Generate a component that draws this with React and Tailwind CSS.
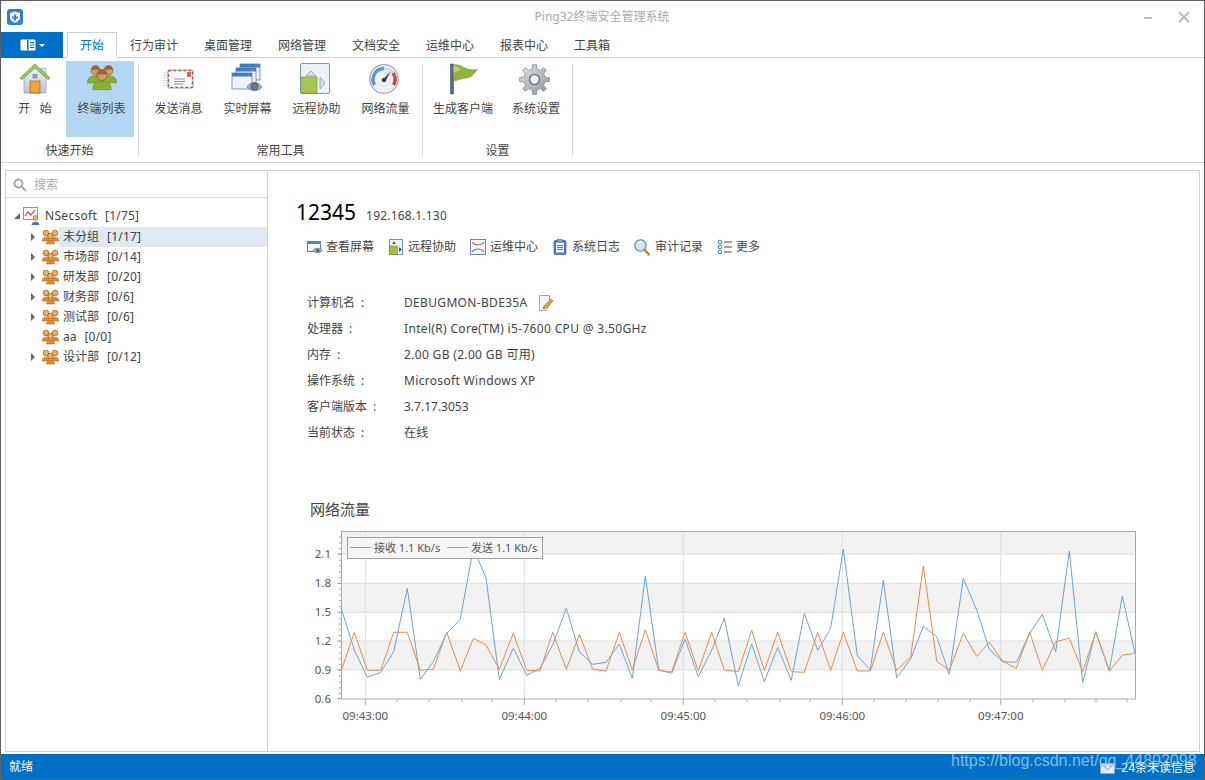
import React from 'react';

// ---- data ----
const tabs = ['行为审计', '桌面管理', '网络管理', '文档安全', '运维中心', '报表中心', '工具箱'];

const groups = [
  { name: '未分组', count: '[1/17]', selected: true, arrow: true },
  { name: '市场部', count: '[0/14]', arrow: true },
  { name: '研发部', count: '[0/20]', arrow: true },
  { name: '财务部', count: '[0/6]', arrow: true },
  { name: '测试部', count: '[0/6]', arrow: true },
  { name: 'aa', count: '[0/0]', arrow: false },
  { name: '设计部', count: '[0/12]', arrow: true },
];

const infoRows = [
  ['计算机名\u2002:', 'DEBUGMON-BDE35A'],
  ['处理器\u2002:', 'Intel(R) Core(TM) i5-7600 CPU @ 3.50GHz'],
  ['内存\u2002:', '2.00 GB (2.00 GB 可用)'],
  ['操作系统\u2002:', 'Microsoft Windows XP'],
  ['客户端版本\u2002:', '3.7.17.3053'],
  ['当前状态\u2002:', '在线'],
];

// points read off the chart, in window pixels
const left = (pts) => pts.map(([x, y]) => [x / 3 + 300, y / 3 + 495]);
const right = (pts) => pts.map(([x, y]) => [x / 3 + 720, y / 3 + 495]);

const blue = [
  ...left([[125, 345], [163, 465], [202, 547], [242, 532], [281, 470], [322, 280], [361, 553], [400, 500], [440, 415], [481, 373], [520, 160], [558, 248], [598, 553], [640, 460], [680, 541], [720, 520], [758, 450], [799, 340], [838, 470], [878, 508], [918, 502], [958, 448], [997, 550], [1036, 243], [1076, 525], [1115, 535], [1155, 432], [1195, 545], [1235, 465]]),
  ...right([[13, 370], [55, 572], [95, 447], [133, 560], [173, 457], [214, 556], [253, 355], [293, 466], [332, 400], [370, 162], [412, 482], [451, 525], [490, 256], [530, 548], [572, 492], [610, 394], [650, 425], [688, 538], [730, 250], [770, 345], [808, 463], [848, 500], [889, 502], [929, 415], [967, 358], [1007, 470], [1048, 168], [1088, 563], [1127, 410], [1168, 527], [1207, 303], [1245, 475]]),
];

const orange = [
  ...left([[125, 523], [163, 412], [202, 526], [242, 526], [281, 412], [322, 412], [361, 526], [400, 523], [440, 412], [481, 528], [520, 430], [558, 450], [598, 523], [640, 415], [680, 526], [720, 528], [758, 412], [799, 523], [838, 418], [878, 523], [918, 528], [958, 412], [997, 525], [1036, 405], [1076, 526], [1115, 530], [1155, 412], [1195, 528], [1235, 412]]),
  ...right([[13, 525], [55, 530], [95, 406], [133, 527], [173, 412], [214, 530], [253, 532], [293, 412], [332, 526], [370, 412], [412, 528], [451, 528], [490, 412], [530, 526], [572, 485], [610, 213], [650, 498], [688, 526], [730, 415], [770, 484], [808, 442], [848, 498], [889, 520], [929, 412], [967, 526], [1007, 440], [1048, 430], [1088, 530], [1127, 412], [1168, 528], [1207, 481], [1245, 475]]),
];

const toLine = (pts) => pts.map(([x, y]) => `${x.toFixed(1)},${y.toFixed(1)}`).join(' ');

// ---- icons ----
function Logo() {
  return (
    <svg width="16" height="16" viewBox="0 0 16 16">
      <rect width="16" height="16" rx="3" fill="#2f7fe0" />
      <path d="M8 2.5 L13 4 V8.5 C13 11 10.5 12.8 8 13.8 C5.5 12.8 3 11 3 8.5 V4 Z" fill="#fff" />
      <path d="M7 5.5 h2 v2 h2 v2 h-2 v2 h-2 v-2 h-2 v-2 h2 z" fill="#2f7fe0" />
    </svg>
  );
}

function HouseIcon() {
  return (
    <svg width="32" height="32" viewBox="0 0 32 32">
      <defs>
        <linearGradient id="wall" x1="0" y1="0" x2="0" y2="1"><stop offset="0" stopColor="#f1f3f8" /><stop offset="1" stopColor="#bcc5d8" /></linearGradient>
      </defs>
      <rect x="22" y="5" width="5" height="8" fill="#d5dae4" stroke="#a4adbe" strokeWidth="0.6" />
      <path d="M5 14 L16 4 L27 14 V30 H5 Z" fill="url(#wall)" stroke="#8e99b0" strokeWidth="0.7" />
      <path d="M1 15 L16 1 L31 15 L29 16.5 L16 5 L3 16.5 Z" fill="#9cc95a" stroke="#5f9130" strokeWidth="0.7" />
      <rect x="13.5" y="11" width="5" height="4.5" fill="#8b99ba" />
      <rect x="11" y="18" width="10" height="12" fill="#f3a33c" stroke="#a86a1d" strokeWidth="0.8" />
    </svg>
  );
}

function PeopleIcon() {
  const person = (cx, cy, s) => (
    <g>
      <path d={`M${cx - 9 * s} ${cy + 14 * s} C${cx - 9 * s} ${cy + 7 * s} ${cx - 5 * s} ${cy + 6 * s} ${cx} ${cy + 6 * s} C${cx + 5 * s} ${cy + 6 * s} ${cx + 9 * s} ${cy + 7 * s} ${cx + 9 * s} ${cy + 14 * s} Z`} fill="#8bb035" stroke="#5c7d1e" strokeWidth="0.5" />
      <circle cx={cx} cy={cy} r={5 * s} fill="#d39a6c" stroke="#8a5428" strokeWidth="0.7" />
      <path d={`M${cx - 5 * s} ${cy - 1 * s} A${5 * s} ${5 * s} 0 0 1 ${cx + 5 * s} ${cy - 1 * s} Z`} fill="#99643a" />
    </g>
  );
  return (
    <svg width="30" height="28" viewBox="0 0 32 30">
      {person(9, 6, 0.95)}
      {person(23, 6, 0.95)}
      {person(16, 11, 1.1)}
    </svg>
  );
}

function SmallGroup() {
  const head = (cx, cy) => (
    <g>
      <path d={`M${cx - 4} ${cy + 8} C${cx - 4} ${cy + 3} ${cx + 4} ${cy + 3} ${cx + 4} ${cy + 8} Z`} fill="#e58a2b" stroke="#a85f14" strokeWidth="0.5" />
      <circle cx={cx} cy={cy} r="2.8" fill="#f0b060" stroke="#8f5520" strokeWidth="0.7" />
    </g>
  );
  return (
    <svg width="17" height="16" viewBox="0 0 17 16">
      {head(4, 4)}
      {head(13, 4)}
      {head(8.5, 7)}
    </svg>
  );
}

function EnvelopeIcon() {
  return (
    <svg width="31" height="22" viewBox="0 0 31 22">
      <g stroke="#b8c1d8" strokeWidth="0.7">
        <path d="M0 5 H5 M0 7.5 H5 M0 10 H5 M0 12.5 H5 M0 15 H5 M0 17.5 H5" />
      </g>
      <rect x="5" y="2" width="25" height="18" rx="1" fill="#f6f8fc" stroke="#6d7a9c" strokeWidth="0.7" />
      <rect x="5.6" y="2.6" width="23.8" height="16.8" fill="none" stroke="#c8443c" strokeWidth="1.2" strokeDasharray="2.5 2.5" />
      <rect x="24" y="4" width="4" height="5" fill="#e0605a" />
      <path d="M11 11 H22 M11 13.5 H22 M11 16 H20" stroke="#7d93c6" strokeWidth="1" />
    </svg>
  );
}

function ScreenStackIcon() {
  const win = (x, y) => (
    <g>
      <rect x={x} y={y} width="20" height="16" fill="#eef3fa" stroke="#4a6f9e" strokeWidth="0.7" />
      <rect x={x} y={y} width="20" height="3.5" fill="#3d7cc0" />
      <rect x={x + 15} y={y + 1} width="3" height="1.6" fill="#e0605a" />
    </g>
  );
  return (
    <svg width="32" height="32" viewBox="0 0 32 32">
      {win(9, 1)}
      {win(5, 5)}
      {win(1, 10)}
      <path d="M16 24 C19 18 28 18 31 24 C28 29 19 29 16 24 Z" fill="#aeb4bc" stroke="#6f7680" strokeWidth="0.7" />
      <circle cx="23.5" cy="23.5" r="3.6" fill="#5f7fa6" stroke="#38465c" strokeWidth="0.7" />
    </svg>
  );
}

function RemoteIcon() {
  return (
    <svg width="30" height="32" viewBox="0 0 30 32">
      <rect x="0.5" y="0.5" width="29" height="30" rx="1.5" fill="#edf2fa" stroke="#7f95c0" />
      <path d="M6 13 L11 8 L16 13 Z" fill="#dde3ee" stroke="#8a97ad" strokeWidth="0.8" />
      <path d="M20 14 L25 20 L20 26 Z" fill="#dde3ee" stroke="#8a97ad" strokeWidth="0.8" />
      <rect x="1" y="14" width="16" height="16" fill="#a6c653" stroke="#7c9e35" strokeWidth="0.7" />
    </svg>
  );
}

function GaugeIcon() {
  return (
    <svg width="30" height="30" viewBox="0 0 30 30">
      <circle cx="15" cy="15" r="14.3" fill="#eef1f7" stroke="#9aa6c0" strokeWidth="1.2" />
      <path d="M5.5 21 A11 11 0 0 1 15 4.5" fill="none" stroke="#5f97d6" strokeWidth="3.5" />
      <path d="M15 4.5 A11 11 0 0 1 24 9" fill="none" stroke="#d5dce8" strokeWidth="3.5" />
      <path d="M24 9 A11 11 0 0 1 24.5 21" fill="none" stroke="#c8503a" strokeWidth="3.5" />
      <path d="M14 15.5 L22 7 L16.5 17 Z" fill="#3d4450" />
      <circle cx="15" cy="16" r="2.3" fill="#38404e" />
    </svg>
  );
}

function FlagIcon() {
  return (
    <svg width="30" height="32" viewBox="0 0 30 32">
      <rect x="1.5" y="1" width="3" height="30" fill="#55698a" stroke="#35435c" strokeWidth="0.5" />
      <path d="M4.5 2 C10 1 13 3.5 17 5.5 C21 7 25 7 28.5 6.5 C26 9 25 11 22.5 13 C19 15.5 15 15 12 16 C9 17 7 17.5 4.5 18 Z" fill="#8fb438" stroke="#6f9027" strokeWidth="0.5" />
      <path d="M4.5 3 C8 3 10 5 12 7 L4.5 10 Z" fill="#b6d265" />
    </svg>
  );
}

function GearIcon() {
  const teeth = 8;
  let d = '';
  for (let i = 0; i < teeth; i++) {
    const a = (i * 2 * Math.PI) / teeth;
    const pts = [[-0.22, 10.8], [-0.13, 15], [0.13, 15], [0.22, 10.8]];
    pts.forEach(([off, r], k) => {
      const x = 15.5 + r * Math.cos(a + off);
      const y = 15.5 + r * Math.sin(a + off);
      d += `${i === 0 && k === 0 ? 'M' : 'L'}${x.toFixed(2)} ${y.toFixed(2)} `;
    });
  }
  return (
    <svg width="31" height="31" viewBox="0 0 31 31">
      <defs>
        <linearGradient id="gear" x1="0" y1="0" x2="1" y2="1"><stop offset="0" stopColor="#dfe3ea" /><stop offset="1" stopColor="#8b94a6" /></linearGradient>
      </defs>
      <path d={d + 'Z'} fill="url(#gear)" stroke="#757e90" strokeWidth="0.7" />
      <circle cx="15.5" cy="15.5" r="5" fill="#f4f5f8" stroke="#6d7688" strokeWidth="1.6" />
    </svg>
  );
}

function RootIcon() {
  return (
    <svg width="18" height="18" viewBox="0 0 18 18">
      <rect x="0.5" y="0.5" width="14" height="12" fill="#fbfbfd" stroke="#8a93a8" />
      <path d="M2 9 L5 5 L8 8 L12 3" fill="none" stroke="#d0443a" strokeWidth="1.2" />
      <circle cx="12.5" cy="11" r="2.5" fill="#e9a76a" stroke="#8f5c2c" strokeWidth="0.5" />
      <path d="M8.5 18 C8.5 13.5 16.5 13.5 16.5 18 Z" fill="#3d78b8" />
    </svg>
  );
}

function ActionIcon({ kind }) {
  if (kind === 'screen') {
    return (
      <svg width="16" height="16" viewBox="0 0 16 16">
        <rect x="0.5" y="2.5" width="13" height="10" fill="#f1f5fa" stroke="#5e7ea8" />
        <rect x="0.5" y="2.5" width="13" height="2.5" fill="#4d86c4" />
        <path d="M6 11.5 C8 8.5 13 8.5 15.5 11.5 C13 14.5 8 14.5 6 11.5 Z" fill="#b2b8c0" stroke="#5d6570" strokeWidth="0.6" />
        <circle cx="10.7" cy="11.5" r="1.8" fill="#48607f" />
      </svg>
    );
  }
  if (kind === 'remote') {
    return (
      <svg width="16" height="16" viewBox="0 0 16 16">
        <rect x="1.5" y="0.5" width="13" height="15" fill="#eef2f8" stroke="#7f8ea8" />
        <path d="M4 5 L6 2.5 L8 5 Z" fill="#4a5568" />
        <path d="M11 8 L14 10.5 L11 13 Z" fill="#4a5568" />
        <rect x="1.5" y="7" width="8" height="8.5" fill="#9dbf45" stroke="#6f9027" strokeWidth="0.6" />
      </svg>
    );
  }
  if (kind === 'ops') {
    return (
      <svg width="16" height="16" viewBox="0 0 16 16">
        <rect x="0.5" y="0.5" width="15" height="15" fill="#f7f9fc" stroke="#6b86b8" />
        <path d="M2 3 C5 7 11 7 14 3" fill="none" stroke="#d65a4a" strokeWidth="1.1" />
        <path d="M2 13 C5 9 11 9 14 13" fill="none" stroke="#5a84c4" strokeWidth="1.1" />
      </svg>
    );
  }
  if (kind === 'log') {
    return (
      <svg width="16" height="16" viewBox="0 0 16 16">
        <rect x="2" y="1.5" width="12" height="14" rx="1" fill="#4d7cb4" stroke="#345a8c" strokeWidth="0.6" />
        <rect x="4" y="3.5" width="8" height="10" fill="#f3f6fa" />
        <rect x="5.5" y="0.5" width="5" height="2.5" fill="#8aa5c8" stroke="#345a8c" strokeWidth="0.5" />
        <path d="M5 6.5 H11 M5 8.5 H11 M5 10.5 H11" stroke="#4d6f9c" strokeWidth="0.9" />
      </svg>
    );
  }
  if (kind === 'search') {
    return (
      <svg width="16" height="17" viewBox="0 0 16 17">
        <circle cx="6.5" cy="6.5" r="5.7" fill="#cfe2f5" stroke="#5d7fa8" strokeWidth="1.1" />
        <path d="M4 4 A4 4 0 0 1 8 3" fill="none" stroke="#fff" strokeWidth="1.2" />
        <path d="M10.7 11 L15 15.5" stroke="#b5792f" strokeWidth="2.2" strokeLinecap="round" />
      </svg>
    );
  }
  return (
    <svg width="16" height="16" viewBox="0 0 16 16">
      <g fill="none" stroke="#3d78b8" strokeWidth="1">
        <circle cx="3" cy="3" r="1.8" />
        <circle cx="3" cy="8" r="1.8" />
        <circle cx="3" cy="13" r="1.8" />
      </g>
      <path d="M7 3 H15 M7 8 H15 M7 13 H15" stroke="#444" strokeWidth="1" />
    </svg>
  );
}

function EditIcon() {
  return (
    <svg width="16" height="16" viewBox="0 0 16 16">
      <path d="M1.5 0.5 H11.5 V10 L8 15.5 H1.5 Z" fill="#f4f6fa" stroke="#98a6bc" />
      <path d="M5 14 L6 11 L13 4 L15 6 L8 13 Z" fill="#e2a63a" stroke="#8f6420" strokeWidth="0.6" />
    </svg>
  );
}

// ---- pieces ----
function RibbonButton({ label, width, iconGap = '', active, children }) {
  return (
    <div className={`flex h-[76px] flex-col items-center ${width} ${active ? 'bg-[#b3d7f2] pl-[3px]' : ''}`}>
      <div className={`flex h-[36px] items-center justify-center ${iconGap}`}>{children}</div>
      <span className="mt-[4px] whitespace-pre leading-[16px]">{label}</span>
    </div>
  );
}

function RibbonGroup({ label, width, children }) {
  return (
    <div className={`flex h-[92px] flex-col border-r border-[#d9d9d9] ${width}`}>
      <div className="flex -mt-[3px]">{children}</div>
      <div className="mt-[6px] text-center leading-[16px]">{label}</div>
    </div>
  );
}

function TreeRow({ name, count, selected, arrow }) {
  return (
    <div className="flex h-[20px] items-center pl-[22px]">
      <span className="flex w-[10px] justify-center">
        {arrow && <span className="h-0 w-0 border-y-[4px] border-l-[4px] border-y-transparent border-l-[#666]" />}
      </span>
      <span className="ml-[4px] flex w-[17px]"><SmallGroup /></span>
      <div className={`flex h-[20px] flex-1 items-center pl-[4px] ${selected ? 'bg-[#dee9f3]' : ''}`}>
        <span>{name}</span>
        <span className="ml-[8px] tracking-[0.2px]">{count}</span>
      </div>
    </div>
  );
}

function TrafficChart() {
  const yLabels = [['2.1', 554], ['1.8', 583.3], ['1.5', 612.3], ['1.2', 641], ['0.9', 669.7], ['0.6', 698.5]];
  const xLabels = [['09:43:00', 365.3], ['09:44:00', 524.3], ['09:45:00', 683.3], ['09:46:00', 842.3], ['09:47:00', 1000.7]];
  const minorX = [397, 429, 462, 492, 556, 588, 621, 651, 715, 747, 780, 810, 874, 906, 938, 970, 1033, 1065, 1096, 1127];
  const minorY = [];
  for (let y = 537; y < 699; y += 5.8) minorY.push(y);
  return (
    <svg className="mt-[5px] block" width="850" height="205" viewBox="300 525 850 205">
      <rect x="341.5" y="531.5" width="794" height="23" fill="#f2f2f2" />
      <rect x="341.5" y="583.3" width="794" height="29" fill="#f2f2f2" />
      <rect x="341.5" y="641" width="794" height="28.7" fill="#f2f2f2" />
      <g stroke="#dedede" strokeWidth="1">
        {yLabels.slice(0, 5).map(([t, y]) => <line key={t} x1="341" x2="1135" y1={y} y2={y} />)}
        {xLabels.map(([t, x]) => <line key={t} x1={x} x2={x} y1="531" y2="699" />)}
      </g>
      <rect x="341.5" y="531.5" width="794" height="167.5" fill="none" stroke="#a8a8a8" />
      <g stroke="#a8a8a8" strokeWidth="1">
        {minorY.map((y) => <line key={y} x1="339" x2="341" y1={y} y2={y} />)}
        {yLabels.map(([t, y]) => <line key={t} x1="337" x2="341" y1={y} y2={y} />)}
        {minorX.map((x) => <line key={x} x1={x} x2={x} y1="699" y2="702" />)}
        {xLabels.map(([t, x]) => <line key={t} x1={x} x2={x} y1="699" y2="705" />)}
      </g>
      <polyline points={toLine(blue)} fill="none" stroke="#6aa5da" strokeWidth="1" />
      <polyline points={toLine(orange)} fill="none" stroke="#ef8a45" strokeWidth="1" />
      <g fill="#555" fontSize="11.5">
        {yLabels.map(([t, y]) => <text key={t} x="331" y={y + 4} textAnchor="end">{t}</text>)}
        {xLabels.map(([t, x]) => <text key={t} x={x} y="720" textAnchor="middle">{t}</text>)}
      </g>
      <rect x="347.5" y="537.5" width="195" height="21" fill="#f6f6f6" fillOpacity="0.9" stroke="#a0a0a0" />
      <line x1="350" x2="371" y1="547.5" y2="547.5" stroke="#6aa5da" strokeWidth="1" />
      <line x1="447" x2="468" y1="547.5" y2="547.5" stroke="#ef8a45" strokeWidth="1" />
      <g fill="#555" fontSize="11">
        <text x="374" y="551.5">接收 1.1 Kb/s</text>
        <text x="471" y="551.5">发送 1.1 Kb/s</text>
      </g>
    </svg>
  );
}

export default function App() {
  return (
    <div className="relative flex h-[780px] w-[1205px] flex-col overflow-hidden border border-[#5f5f5f] bg-white font-['Noto_Sans','Noto_Sans_CJK_SC',sans-serif] text-[12px] text-[#444]">
      {/* title bar */}
      <div className="flex h-[31px] items-center pl-[6px]">
        <Logo />
        <div className="flex-1 pl-[37px] text-center text-[#aaa]">Ping32终端安全管理系统</div>
        <span className="mr-[26px] mt-[3px] h-[2px] w-[8px] bg-[#bbb]" />
        <svg className="mr-[14px]" width="12" height="12" viewBox="0 0 12 12"><path d="M1 1 L11 11 M11 1 L1 11" stroke="#bbb" strokeWidth="2" /></svg>
      </div>

      {/* tabs */}
      <div className="flex h-[26px] border-b border-[#d0d0d0]">
        <div className="flex h-[26px] w-[62px] items-center justify-center gap-[3px] bg-[#0070c6]">
          <svg width="16" height="12" viewBox="0 0 16 12">
            <rect x="0.5" y="0.5" width="15" height="11" rx="1.5" fill="#fff" />
            <rect x="7" y="1" width="1.5" height="10" fill="#0070c6" />
            <path d="M10 3.5 H14 M10 6 H14 M10 8.5 H14" stroke="#0070c6" />
          </svg>
          <span className="h-0 w-0 border-x-[3px] border-t-[3px] border-x-transparent border-t-white" />
        </div>
        <div className="ml-[4px] flex h-[26px] w-[50px] items-center justify-center border border-b-white border-[#d0d0d0] bg-white pt-[1px] text-[#0070c6]">开始</div>
        {tabs.map((t) => (
          <div key={t} className="flex items-center px-[13px] pt-[2px]">{t}</div>
        ))}
      </div>

      {/* ribbon */}
      <div className="flex h-[105px] items-start border-b border-[#d0d0d0] pt-[6px]">
        <RibbonGroup label="快速开始" width="w-[138px]">
          <RibbonButton label="开   始" width="ml-[3px] w-[62px]"><HouseIcon /></RibbonButton>
          <RibbonButton label="终端列表" width="w-[68px]" active><PeopleIcon /></RibbonButton>
        </RibbonGroup>
        <RibbonGroup label="常用工具" width="w-[284px]">
          <RibbonButton label="发送消息" width="ml-[5px] w-[69px]" iconGap="pr-[1px]"><EnvelopeIcon /></RibbonButton>
          <RibbonButton label="实时屏幕" width="w-[69px]" iconGap="pr-[2px]"><ScreenStackIcon /></RibbonButton>
          <RibbonButton label="远程协助" width="w-[69px]" iconGap="pr-[4px]"><RemoteIcon /></RibbonButton>
          <RibbonButton label="网络流量" width="w-[69px]" iconGap="pr-[4px]"><GaugeIcon /></RibbonButton>
        </RibbonGroup>
        <RibbonGroup label="设置" width="w-[150px]">
          <RibbonButton label="生成客户端" width="ml-[2px] w-[76px]" iconGap="pl-[2px]"><FlagIcon /></RibbonButton>
          <RibbonButton label="系统设置" width="w-[70px]" iconGap="pr-[4px]"><GearIcon /></RibbonButton>
        </RibbonGroup>
      </div>

      {/* body */}
      <div className="flex flex-1 px-[4px] pb-[2px] pt-[7px]">
        <div className="flex w-[262px] flex-col border border-r-0 border-[#d0d0d0]">
          <div className="flex h-[27px] items-center gap-[7px] border-b border-[#d8d8d8] pl-[7px] pt-[1px] text-[#aaa]">
            <svg width="14" height="14" viewBox="0 0 14 14"><circle cx="5.5" cy="5.5" r="4" fill="none" stroke="#a8a8a8" strokeWidth="2" /><path d="M9 9 L13 13" stroke="#a8a8a8" strokeWidth="2" /></svg>
            <span>搜索</span>
          </div>
          <div className="pt-[7px]">
            <div className="flex h-[22px] items-center pl-[8px] pb-[1px]">
              <span className="h-0 w-0 border-b-[6px] border-l-[6px] border-b-[#666] border-l-transparent" />
              <span className="ml-[3px] flex"><RootIcon /></span>
              <span className="ml-[4px] tracking-[0.3px]">NSecsoft</span>
              <span className="ml-[8px] tracking-[0.2px]">[1/75]</span>
            </div>
            {groups.map((g) => <TreeRow key={g.name} {...g} />)}
          </div>
        </div>

        <div className="flex flex-1 flex-col border border-[#d0d0d0]">
          <div className="ml-[28px] mt-[28px] flex h-[26px] items-baseline">
            <span className="text-[21px] leading-[26px] text-black">12345</span>
            <span className="ml-[10px] tracking-[0.2px]">192.168.1.130</span>
          </div>
          <div className="ml-[39px] mt-[11px] flex h-[22px] items-center">
            <span className="flex w-[81px] items-center gap-[3px]"><ActionIcon kind="screen" />查看屏幕</span>
            <span className="flex w-[82px] items-center gap-[4px]"><ActionIcon kind="remote" />远程协助</span>
            <span className="flex w-[82px] items-center gap-[4px]"><ActionIcon kind="ops" />运维中心</span>
            <span className="flex w-[82px] items-center gap-[4px]"><ActionIcon kind="log" />系统日志</span>
            <span className="flex w-[83px] items-center gap-[5px]"><ActionIcon kind="search" />审计记录</span>
            <span className="flex items-center gap-[3px]"><ActionIcon kind="more" />更多</span>
          </div>
          <div className="ml-[39px] mt-[32px] flex flex-col">
            {infoRows.map(([k, v], i) => (
              <div key={k} className="flex h-[26px] items-center">
                <span className="w-[97px]">{k}</span>
                <span className={i === 4 ? '' : 'tracking-[0.33px]'}>{v}</span>
                {i === 0 && <span className="ml-[10px] flex"><EditIcon /></span>}
              </div>
            ))}
          </div>
          <div className="ml-[42px] mt-[52px] text-[15px] leading-[22px]">网络流量</div>
          <div className="ml-[32px]"><TrafficChart /></div>
        </div>
      </div>

      {/* status bar */}
      <div className="flex h-[25px] items-center justify-between bg-[#0070c6] pl-[8px] pr-[9px] text-white">
        <span className="pt-[1px]">就绪</span>
        <span className="flex items-center gap-[6px] pt-[3px]">
          <svg width="15" height="11" viewBox="0 0 15 11"><rect x="0.5" y="0.5" width="14" height="10" fill="#e4e8f4" stroke="#9aa5c8" /><path d="M1 1 L7.5 6.5 L14 1" fill="none" stroke="#8490b8" /></svg>
          24条未读信息
        </span>
      </div>
      <div className="absolute left-[950px] top-[751px] font-['Liberation_Sans',sans-serif] text-[16px] leading-[18px] text-[#a5cdeb]/80">https://blog.csdn.net/qq_44892098</div>
    </div>
  );
}
